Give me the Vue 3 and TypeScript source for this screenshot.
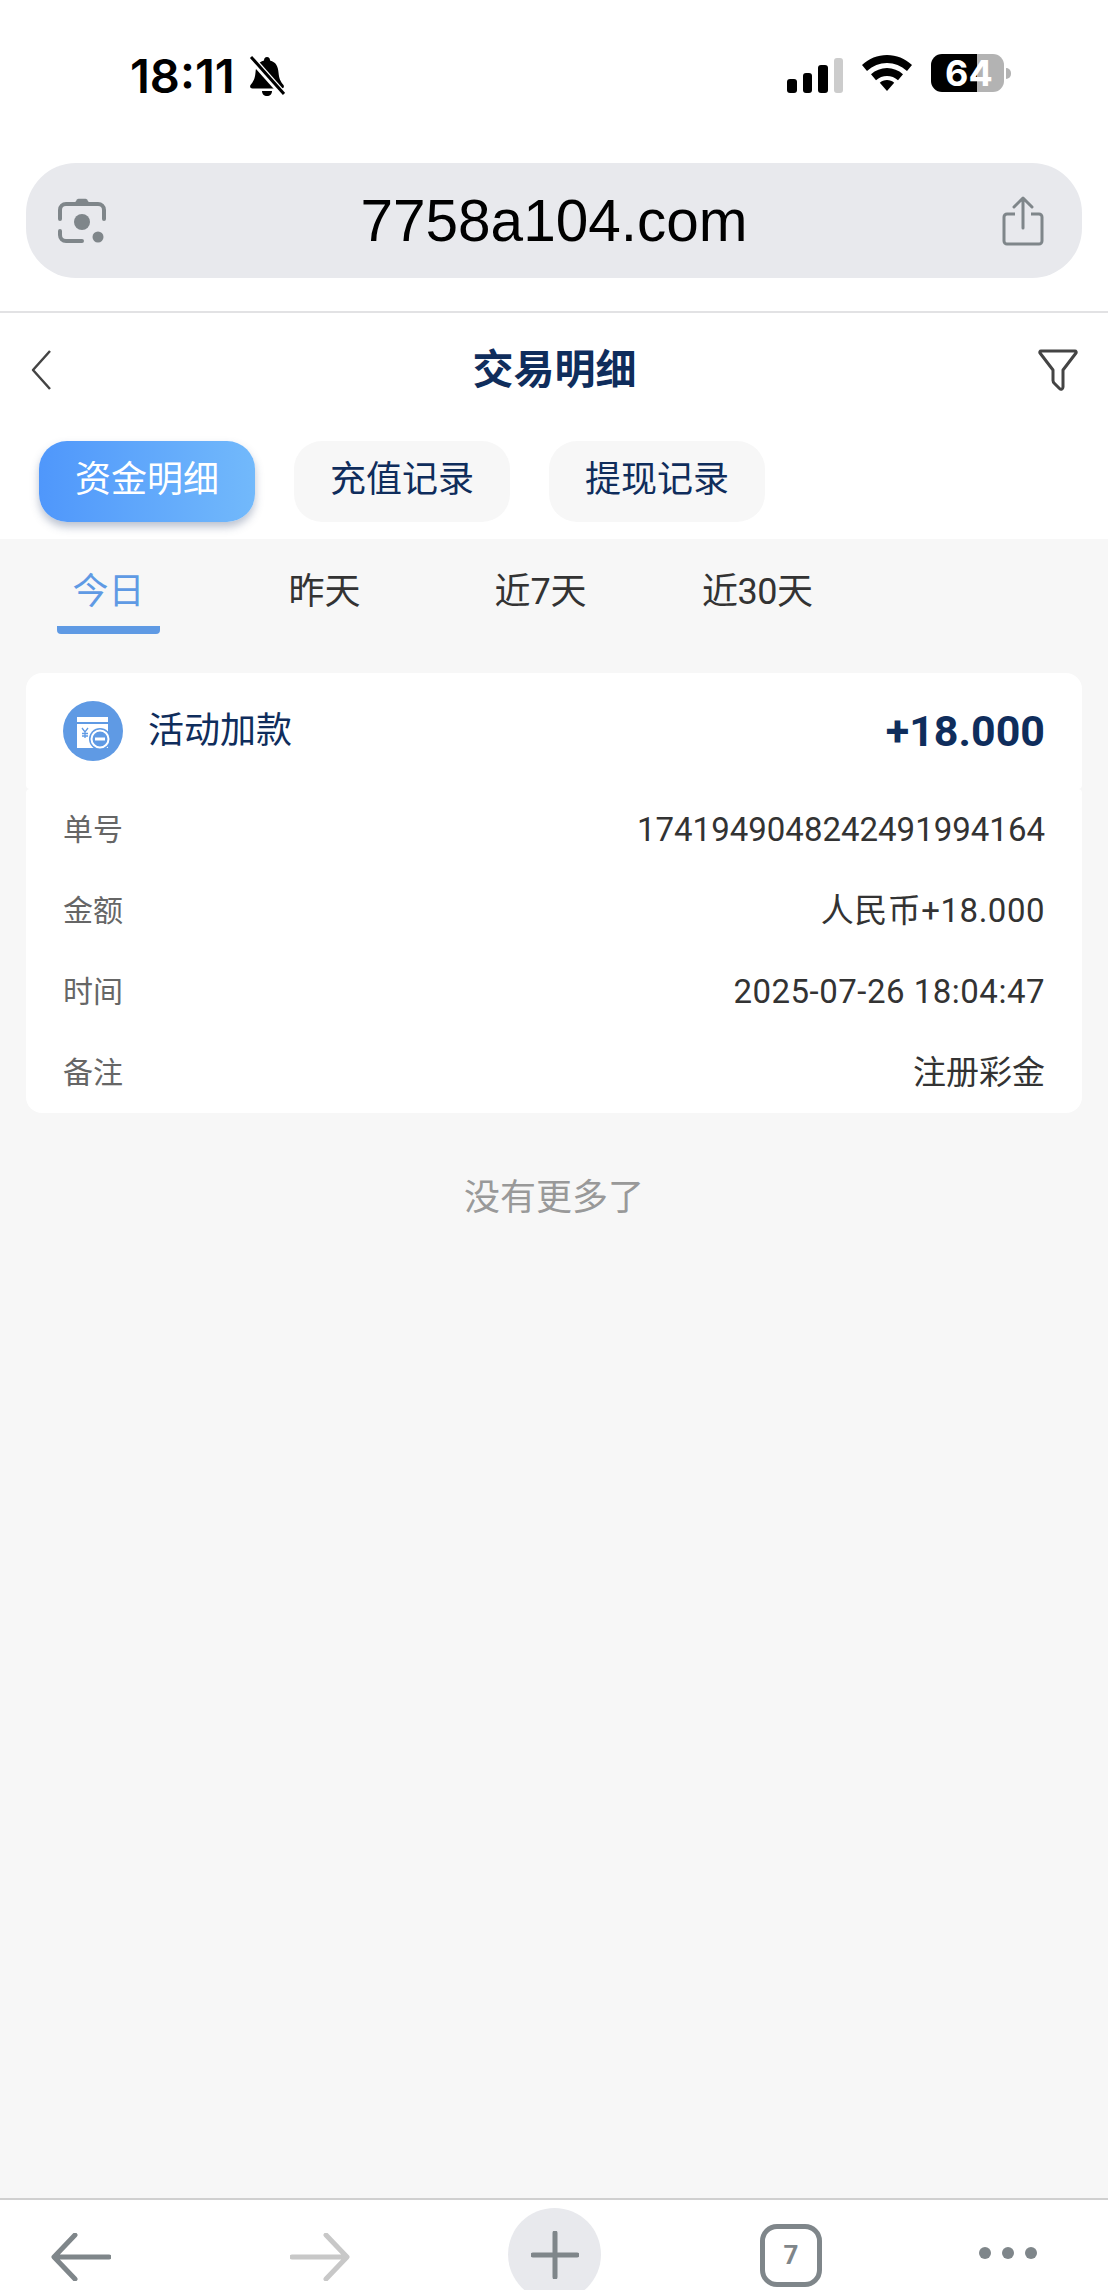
<script setup lang="ts">
interface Row { label: string; value: string; spacing?: string }
const mainTabs: string[] = ['资金明细', '充值记录', '提现记录']
const dateTabs: string[] = ['今日', '昨天', '近7天', '近30天']
const rows: Row[] = [
  { label: '单号', value: '1741949048242491994164' },
  { label: '金额', value: '人民币+18.000', spacing: 'wide' },
  { label: '时间', value: '2025-07-26 18:04:47', spacing: 'wide' },
  { label: '备注', value: '注册彩金' },
]
</script>

<template>
  <div class="page">
    <header class="chrome">
      <div class="status">
        <div class="status-left">
          <span class="clock">18:11</span>
          <svg class="bell" viewBox="0 0 36 44" width="36" height="44">
            <path d="M18 3c2 0 3 1.500 3 3.500 6 1.500 8 6 8.500 12 .5 6 2 9 5 12.500 1 2 0 3.500-2 3.500H3.500c-2 0-3-1.500-2-3.500 3-3.500 4.500-6.500 5-12.500C7 12.500 9 8 15 6.500 15 4.500 16 3 18 3z" fill="#000"/>
            <path d="M13 37h10c0 3-2 5-5 5s-5-2-5-5z" fill="#000"/>
            <path d="M2 4l32 36" stroke="#fff" stroke-width="7"/>
            <path d="M2 3l33 37" stroke="#000" stroke-width="3"/>
          </svg>
        </div>
        <div class="status-right">
          <div class="signal">
            <i class="bar b1"></i><i class="bar b2"></i><i class="bar b3"></i><i class="bar b4"></i>
          </div>
          <svg class="wifi" viewBox="0 0 50 36" width="50" height="36">
            <path d="M25 0c9.500 0 18 3.600 25 10l-5 6C39 10.700 32.500 8 25 8S11 10.700 5 16L0 10C7 3.600 15.500 0 25 0z" fill="#000"/>
            <path d="M25 13c6 0 11.500 2.300 16 6.200l-5 6C33 22.500 29 21 25 21s-8 1.500-11 4.200l-5-6C13.500 15.300 19 13 25 13z" fill="#000"/>
            <path d="M25 25c2.800 0 5.200 1 7.200 2.700L25 36l-7.200-8.300C19.800 26 22.200 25 25 25z" fill="#000"/>
          </svg>
          <div class="battery">
            <div class="battery-body"><span>64</span></div>
            <i class="battery-nub"></i>
          </div>
        </div>
      </div>
      <div class="address">
        <svg viewBox="0 0 48 46" width="48" height="46" class="addr-icon">
          <path d="M16 6l3-4.500a2 2 0 0 1 1.500-.8h7a2 2 0 0 1 1.500.8L32 6z" fill="#7f868a"/>
          <path d="M2 21v-9a6 6 0 0 1 6-6h32a6 6 0 0 1 6 6v9" fill="none" stroke="#7f868a" stroke-width="4" stroke-linecap="round"/>
          <path d="M2 33v4a6 6 0 0 0 6 6h16" fill="none" stroke="#7f868a" stroke-width="4" stroke-linecap="round"/>
          <circle cx="24" cy="24" r="8" fill="#7f868a"/>
          <circle cx="40" cy="39" r="5.500" fill="#7f868a"/>
        </svg>
        <span class="url">7758a104.com</span>
        <svg viewBox="0 0 42 50" width="42" height="50" class="addr-icon">
          <path d="M13 18H5a3 3 0 0 0-3 3v24a3 3 0 0 0 3 3h32a3 3 0 0 0 3-3V21a3 3 0 0 0-3-3h-8" fill="none" stroke="#7f868a" stroke-width="3"/>
          <path d="M21 32V3M12 11l9-9 9 9" fill="none" stroke="#7f868a" stroke-width="3" stroke-linecap="round" stroke-linejoin="round"/>
        </svg>
      </div>
    </header>

    <section class="top">
      <div class="nav">
        <svg class="nav-back" viewBox="0 0 20 40" width="20" height="40">
          <path d="M19 1L2 20l17 19" fill="none" stroke="#444" stroke-width="2.500" stroke-linejoin="round"/>
        </svg>
        <h1 class="title">交易明细</h1>
        <svg viewBox="0 0 40 42" width="40" height="42">
          <path d="M3 2h34c1 0 1.500 1 1 2L25 21v17c0 2-2 3-3.500 1.500l-5-5c-.8-.8-1.500-1.500-1.500-3V21L2 4c-.5-1 0-2 1-2z" fill="none" stroke="#444" stroke-width="3" stroke-linejoin="round"/>
        </svg>
      </div>
      <div class="tabs">
        <div v-for="(t, i) in mainTabs" :key="t" class="tab" :class="{ active: i === 0 }">{{ t }}</div>
      </div>
    </section>

    <main class="content">
      <div class="dates">
        <div v-for="(d, i) in dateTabs" :key="d" class="date" :class="{ on: i === 0 }">{{ d }}</div>
      </div>
      <div class="card">
        <div class="card-head">
          <div class="head-left">
            <svg class="coin" viewBox="0 0 60 60" width="60" height="60">
              <circle cx="30" cy="30" r="30" fill="#5f9ae4"/>
              <rect x="14" y="16" width="31" height="5" fill="#fff"/>
              <rect x="14" y="23" width="31" height="24" fill="#fff"/>
              <circle cx="37" cy="38" r="11" fill="#5f9ae4"/>
              <circle cx="37" cy="38" r="8.500" fill="none" stroke="#fff" stroke-width="2"/>
              <rect x="32" y="36.500" width="10" height="3" fill="#fff"/>
              <path d="M19 27l3 4 3-4M22 31v6M19 32.500h6M19 35h6" stroke="#5f9ae4" stroke-width="1.300" fill="none"/>
            </svg>
            <span class="kind">活动加款</span>
          </div>
          <span class="amount">+18.000</span>
        </div>
        <div class="card-body">
          <div v-for="r in rows" :key="r.label" class="row">
            <span class="label">{{ r.label }}</span>
            <span class="value" :class="r.spacing">{{ r.value }}</span>
          </div>
        </div>
      </div>
      <p class="nomore">没有更多了</p>
    </main>

    <footer class="toolbar">
      <svg viewBox="0 0 60 48" width="60" height="48">
        <path d="M58 24H6M24 2L3 24l21 22" fill="none" stroke="#7f868a" stroke-width="5" stroke-linecap="round" stroke-linejoin="round"/>
      </svg>
      <svg viewBox="0 0 60 48" width="60" height="48">
        <path d="M2 24h52M36 2l21 22-21 22" fill="none" stroke="#c8c8c8" stroke-width="5" stroke-linecap="round" stroke-linejoin="round"/>
      </svg>
      <div class="plus">
        <svg viewBox="0 0 48 48" width="48" height="48">
          <path d="M24 2v44M2 24h44" stroke="#7f868a" stroke-width="5" stroke-linecap="round"/>
        </svg>
      </div>
      <div class="count">7</div>
      <div class="dots"><i></i><i></i><i></i></div>
    </footer>
  </div>
</template>

<style>
html, body { margin: 0; padding: 0; background: #fff; }
</style>

<style scoped>
.page {
  width: 1108px;
  height: 2290px;
  display: flex;
  flex-direction: column;
  overflow: hidden;
  background: #fff;
  font-family: Roboto, "Noto Sans CJK SC", sans-serif;
}
.chrome { height: 313px; box-sizing: border-box; border-bottom: 2px solid #e2e2e4; flex: none; }
.status {
  height: 163px;
  box-sizing: border-box;
  padding: 53px 97px 0 130px;
  display: flex;
  justify-content: space-between;
  align-items: flex-start;
}
.status-left { display: flex; align-items: center; gap: 14px; height: 46px; }
.clock { font-family: Inter, sans-serif; font-size: 47px; font-weight: 600; line-height: 46px; color: #000; }
.status-right { display: flex; align-items: center; gap: 19px; height: 40px; }
.signal { display: flex; align-items: flex-end; gap: 6px; height: 36px; margin-top: 3px; }
.bar { display: block; width: 9.500px; background: #000; border-radius: 3px; }
.b1 { height: 14px; }
.b2 { height: 20px; }
.b3 { height: 28px; }
.b4 { height: 35px; background: #ccc; }
.battery { display: flex; align-items: center; gap: 2px; }
.battery-body {
  width: 73px;
  height: 38px;
  border-radius: 11px;
  background: linear-gradient(90deg, #000 0, #000 46px, #b3b3b3 46px);
  color: #fff;
  font-family: Inter, sans-serif;
  font-size: 36px;
  font-weight: 700;
  line-height: 38px;
  padding-left: 14px;
  box-sizing: border-box;
}
.battery-nub { display: block; width: 5px; height: 11px; background: #b3b3b3; border-radius: 0 5px 5px 0; }
.address {
  margin: 0 26px;
  height: 115px;
  border-radius: 50px;
  background: #e8e9ed;
  display: flex;
  align-items: center;
  justify-content: space-between;
  padding: 0 38px 0 32px;
}
.addr-icon { flex: none; }
.url { font-family: "Liberation Sans", sans-serif; font-size: 58.500px; color: #000; line-height: 115px; }

.top { flex: none; height: 226px; background: #fff; }
.nav {
  height: 114px;
  box-sizing: border-box;
  padding: 0 30px 0 31px;
  display: flex;
  align-items: center;
}
.nav-back { margin-right: 20px; }
.title { flex: 1; margin: 0; text-align: center; font-size: 41px; font-weight: 700; color: #0f2d5c; line-height: 60px; }
.tabs { display: flex; gap: 39px; padding: 14px 0 0 39px; }
.tab {
  width: 216px;
  height: 81px;
  border-radius: 28px;
  background: #f7f7f7;
  color: #0f2d5c;
  font-size: 36px;
  line-height: 79px;
  text-align: center;
}
.tab.active {
  color: #fff;
  background: linear-gradient(90deg, #4f97fb, #72b9fb);
  box-shadow: 0 5px 8px rgba(60, 80, 120, 0.35);
}

.content { flex: 1; background: #f7f7f7; padding: 0 26px; display: flex; flex-direction: column; }
.dates { display: flex; margin-left: 31px; height: 95px; flex: none; }
.date {
  width: 103px;
  margin-right: 113px;
  height: 95px;
  box-sizing: border-box;
  padding-top: 28px;
  font-size: 36px;
  line-height: 50px;
  color: #333;
  text-align: center;
  white-space: nowrap;
  border-bottom: 8px solid transparent;
}
.date:last-child { margin-left: -3px; letter-spacing: -0.500px; }
.date.on { color: #5f9ae4; border-bottom-color: #5f9ae4; border-radius: 4px; }
.card { margin-top: 39px; flex: none; }
.card-head {
  height: 116px;
  background: #fff;
  border-radius: 16px 16px 4px 4px;
  display: flex;
  align-items: center;
  justify-content: space-between;
  padding: 0 37px;
}
.head-left { display: flex; align-items: center; gap: 25px; }
.kind { font-size: 36px; color: #0f2d5c; line-height: 50px; }
.amount { font-size: 43px; font-weight: 700; color: #0f2d5c; }
.card-body {
  height: 324px;
  box-sizing: border-box;
  background: #fff;
  border-radius: 4px 4px 16px 16px;
  padding: 0 37px;
}
.row { height: 81px; display: flex; align-items: center; justify-content: space-between; }
.label { font-size: 30px; line-height: 44px; color: #666; }
.value { font-size: 33px; line-height: 44px; color: #333; }
.value.wide { letter-spacing: 0.500px; }
.nomore { margin: 60px 0 0; text-align: center; font-size: 36px; line-height: 50px; color: #999; }

.toolbar {
  flex: none;
  height: 92px;
  box-sizing: border-box;
  border-top: 2px solid #d0d0d0;
  background: #fff;
  display: flex;
  align-items: flex-start;
  padding: 8px 0 0 51px;
  overflow: hidden;
}
.toolbar > svg:nth-child(1) { margin: 25px 0 0; }
.toolbar > svg:nth-child(2) { margin: 25px 0 0 179px; }
.plus {
  width: 93px;
  height: 93px;
  flex: none;
  margin-left: 158px;
  border-radius: 50%;
  background: #e8e9ed;
  display: flex;
  align-items: center;
  justify-content: center;
}
.count {
  width: 62px;
  height: 63px;
  box-sizing: border-box;
  flex: none;
  margin: 16px 0 0 159px;
  border: 5px solid #7f868a;
  border-radius: 17px;
  color: #7f868a;
  font-size: 26px;
  font-weight: 700;
  line-height: 53px;
  text-align: center;
}
.dots { display: flex; gap: 11px; margin: 39px 0 0 157px; }
.dots i { display: block; width: 12px; height: 12px; border-radius: 50%; background: #7f868a; }
</style>
